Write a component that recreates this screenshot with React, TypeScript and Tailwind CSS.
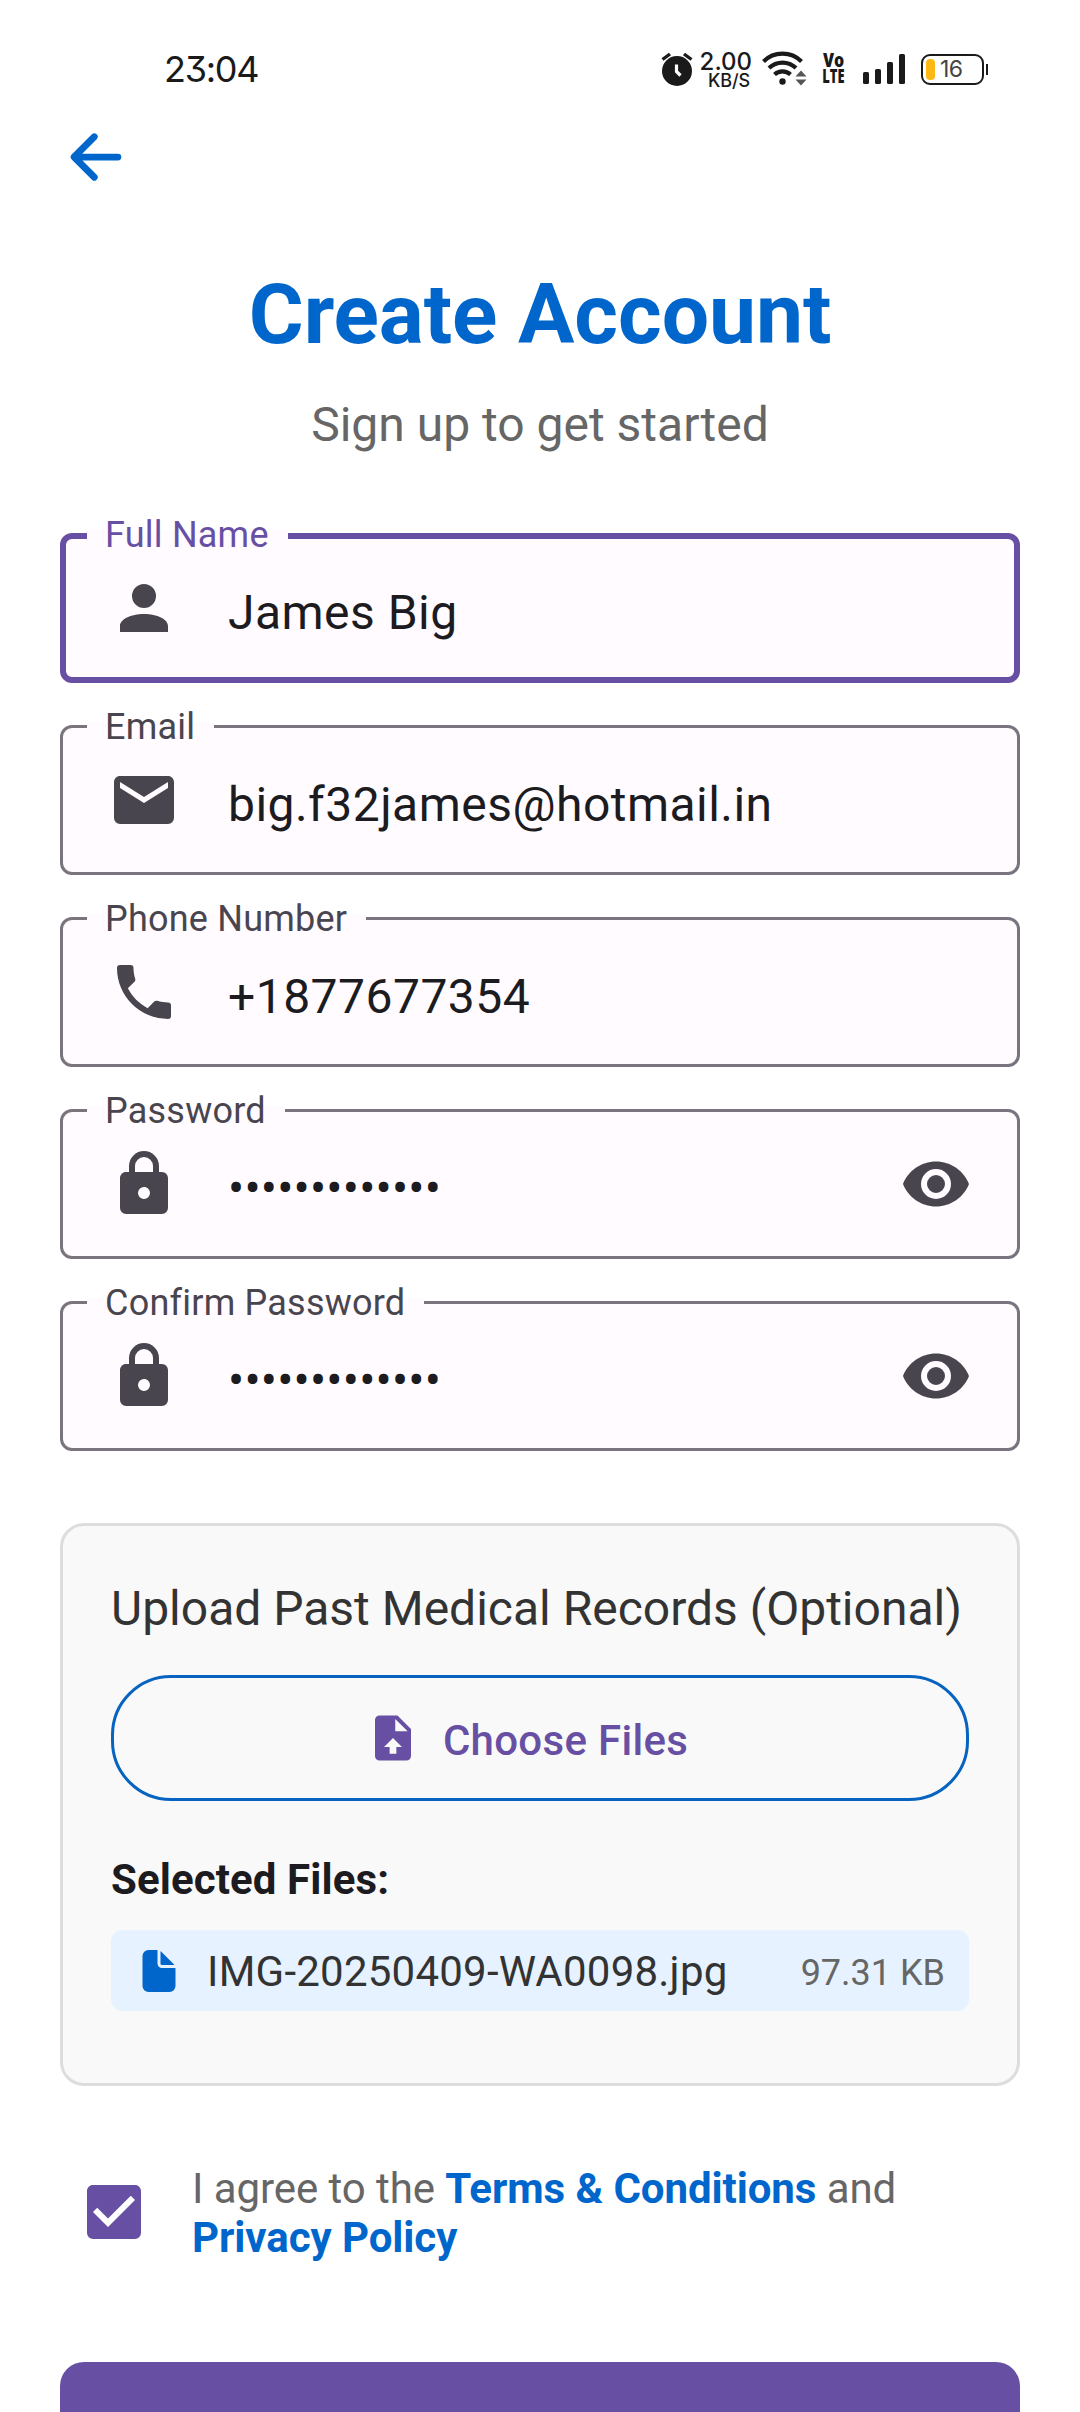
import React from "react";

const ICONS = {
  account:
    "M12,4A4,4 0 0,1 16,8A4,4 0 0,1 12,12A4,4 0 0,1 8,8A4,4 0 0,1 12,4M12,14C16.42,14 20,15.79 20,18V20H4V18C4,15.79 7.58,14 12,14Z",
  email:
    "M20,8L12,13L4,8V6L12,11L20,6M20,4H4C2.89,4 2,4.89 2,6V18A2,2 0 0,0 4,20H20A2,2 0 0,0 22,18V6C22,4.89 21.1,4 20,4Z",
  phone:
    "M6.62,10.79C8.06,13.62 10.38,15.94 13.21,17.38L15.41,15.18C15.69,14.9 16.08,14.82 16.43,14.93C17.55,15.3 18.75,15.5 20,15.5A1,1 0 0,1 21,16.5V20A1,1 0 0,1 20,21A17,17 0 0,1 3,4A1,1 0 0,1 4,3H7.5A1,1 0 0,1 8.5,4C8.5,5.25 8.7,6.45 9.07,7.57C9.18,7.92 9.1,8.31 8.82,8.59L6.62,10.79Z",
  lock:
    "M12,17A2,2 0 0,0 14,15C14,13.89 13.1,13 12,13A2,2 0 0,0 10,15A2,2 0 0,0 12,17M18,8A2,2 0 0,1 20,10V20A2,2 0 0,1 18,22H6A2,2 0 0,1 4,20V10C4,8.89 4.9,8 6,8H7V6A5,5 0 0,1 12,1A5,5 0 0,1 17,6V8H18M12,3A3,3 0 0,0 9,6V8H15V6A3,3 0 0,0 12,3Z",
  eye:
    "M12,9A3,3 0 0,0 9,12A3,3 0 0,0 12,15A3,3 0 0,0 15,12A3,3 0 0,0 12,9M12,17A5,5 0 0,1 7,12A5,5 0 0,1 12,7A5,5 0 0,1 17,12A5,5 0 0,1 12,17M12,4.5C7,4.5 2.73,7.61 1,12C2.73,16.39 7,19.5 12,19.5C17,19.5 21.27,16.39 23,12C21.27,7.61 17,4.5 12,4.5Z",
  fileUpload:
    "M14,2H6A2,2 0 0,0 4,4V20A2,2 0 0,0 6,22H18A2,2 0 0,0 20,20V8L14,2M13.5,16V19H10.5V16H8L12,12L16,16H13.5M13,9V3.5L18.5,9H13Z",
  checkbox:
    "M10,17L5,12L6.41,10.58L10,14.17L17.59,6.58L19,8M19,3H5C3.89,3 3,3.89 3,5V19A2,2 0 0,0 5,21H19A2,2 0 0,0 21,19V5C21,3.89 20.1,3 19,3Z",
};

function Icon({ name, className }: { name: keyof typeof ICONS; className: string }) {
  return (
    <svg viewBox="0 0 24 24" fill="currentColor" className={className}>
      <path d={ICONS[name]} />
    </svg>
  );
}

function StatusBar() {
  return (
    <div className="flex h-[121px] items-start pr-[92px] pl-[164px] font-['Inter',sans-serif] text-[#1a1a1a]">
      <span className="mt-[47px] text-[36px] leading-[44px] tracking-[-1.3px] [font-feature-settings:'cv09']">
        23:04
      </span>
      <div className="mt-[50px] ml-auto flex items-start">
        <svg viewBox="0 0 32 36" className="mt-[1px] h-9 w-8">
          <circle cx="16" cy="20" r="15" fill="#1a1a1a" />
          <path d="M1.5 8.5L9 3M30.5 8.5L23 3" stroke="#1a1a1a" strokeWidth="3.4" />
          <path d="M15.5 13.5V20.5L19.5 24.5" stroke="#fff" strokeWidth="3.2" fill="none" />
        </svg>
        <div className="ml-[8px] flex w-[51px] flex-col items-end font-medium">
          <span className="text-[24px] leading-[24px]">2.00</span>
          <span className="pr-[2px] text-[18px] leading-[14px] tracking-[-0.1px]">KB/S</span>
        </div>
        <svg viewBox="0 0 45 36" className="ml-[10px] h-9 w-[45px]">
          <g fill="none" stroke="#1a1a1a" strokeWidth="4.2">
            <path d="M1.5 11.5A27 27 0 0 1 39.5 11.5" />
            <path d="M7 18A19.5 19.5 0 0 1 34 18" />
            <path d="M12.5 24.5A12 12 0 0 1 28.5 24.5" />
          </g>
          <circle cx="20.5" cy="31.5" r="3.2" fill="#1a1a1a" />
          <path d="M39 20.5L44.5 26.5H33.5zM39 35.5L44.5 29.5H33.5z" fill="#555" />
        </svg>
        <div className="mt-[2px] ml-[15px] flex w-[23px] flex-col items-center font-['Open_Sans',sans-serif] text-[19px] leading-[16px] font-extrabold">
          <span className="scale-x-[0.84]">Vo</span>
          <span className="scale-x-[0.68]">LTE</span>
        </div>
        <div className="mt-[4px] ml-[18px] flex h-[30px] items-end gap-[6px]">
          <div className="h-[12px] w-[6px] rounded-[1.5px] bg-[#1a1a1a]" />
          <div className="h-[15px] w-[6px] rounded-[1.5px] bg-[#1a1a1a]" />
          <div className="h-[22px] w-[6px] rounded-[1.5px] bg-[#1a1a1a]" />
          <div className="h-[30px] w-[6px] rounded-[1.5px] bg-[#1a1a1a]" />
        </div>
        <div className="mt-[4px] ml-[16px] flex items-center">
          <div className="flex h-[31px] w-[63px] items-center rounded-[9px] border-2 border-[#1a1a1a] pl-[3px]">
            <div className="h-[21px] w-[9px] rounded-[4px] bg-[#fdb913]" />
            <span className="ml-[5px] text-[23px] leading-[27px] tracking-[-0.5px] text-[#444]">16</span>
          </div>
          <div className="ml-[2px] h-[11px] w-[2px] bg-[#1a1a1a]" />
        </div>
      </div>
    </div>
  );
}

type FieldProps = {
  label: string;
  value: string;
  icon: keyof typeof ICONS;
  active?: boolean;
  secret?: boolean;
};

function Field({ label, value, icon, active, secret }: FieldProps) {
  return (
    <div
      className={
        active
          ? "relative h-[150px] rounded-[12px] border-[6px] border-[#6750a4] bg-[#fffbfe] px-[42px]"
          : "relative h-[150px] rounded-[12px] border-[3px] border-[#79747e] bg-[#fffbfe] px-[45px]"
      }
    >
      <label
        className={
          active
            ? "absolute -top-[9px] left-[21px] flex h-[9px] items-center bg-[#fffbfe] pr-[19px] pl-[18px] text-[36px] leading-[48px] whitespace-nowrap text-[#6750a4]"
            : "absolute -top-[6px] left-[24px] flex h-[9px] items-center bg-[#fffbfe] pr-[19px] pl-[18px] text-[36px] leading-[48px] whitespace-nowrap text-[#49454f]"
        }
      >
        <span className="tracking-[0.22px]">{label}</span>
      </label>
      <div className="flex h-full items-center">
        <Icon name={icon} className="size-[72px] shrink-0 text-[#49454f]" />
        <span
          className={
            secret
              ? "mt-[10px] ml-[48px] grow text-[48px] leading-[56px] tracking-[0.2px] text-[#1c1b1f]"
              : "mt-[10px] ml-[48px] grow text-[48px] leading-[56px] tracking-[0.47px] text-[#1c1b1f]"
          }
        >
          {value}
        </span>
        {secret && <Icon name="eye" className="size-[72px] shrink-0 text-[#49454f]" />}
      </div>
    </div>
  );
}

function UploadCard() {
  return (
    <section className="mt-[72px] flex h-[563px] flex-col rounded-[24px] border-[3px] border-[#ddd] bg-[#f9f9f9] p-12">
      <h2 className="-mt-px text-[48px] leading-[72px] whitespace-nowrap text-[#333]">
        Upload Past Medical Records (Optional)
      </h2>
      <button className="mt-[30px] flex h-[126px] items-center justify-center rounded-[60px] border-[3px] border-[#0664c0] pr-[26px] text-[#6750a4]">
        <Icon name="fileUpload" className="size-[54px]" />
        <span className="mt-[6px] ml-[23px] text-[42px] leading-[60px] font-medium tracking-[0.3px]">Choose Files</span>
      </button>
      <h3 className="mt-[49px] text-[42px] leading-[60px] font-bold tracking-[0.1px] text-[#1c1b1f]">
        Selected Files:
      </h3>
      <div className="mt-[20px] flex h-[81px] items-center rounded-[12px] bg-[#e6f2ff] px-6">
        <svg viewBox="0 0 512 512" fill="#0066cc" className="size-12">
          <path d="M428 224H288a48 48 0 01-48-48V36a4 4 0 00-4-4h-92a64 64 0 00-64 64v320a64 64 0 0064 64h224a64 64 0 0064-64V228a4 4 0 00-4-4z" />
          <path d="M419.22 188.59L275.41 44.78a2 2 0 00-3.41 1.41V176a16 16 0 0016 16h129.81a2 2 0 001.41-3.41z" />
        </svg>
        <span className="mt-[3px] ml-[24px] grow text-[42px] leading-[60px] tracking-[0.23px] text-[#333]">
          IMG-20250409-WA0098.jpg
        </span>
        <span className="mt-[4px] text-[36px] leading-[48px] text-[#666]">97.31 KB</span>
      </div>
    </section>
  );
}

export default function App() {
  return (
    <div className="h-[2412px] w-[1080px] overflow-hidden bg-white font-['Roboto',sans-serif]">
      <StatusBar />
      <main className="flex flex-col px-[60px]">
        <svg
          viewBox="0 0 512 512"
          fill="none"
          stroke="#0066cc"
          strokeWidth="48"
          strokeLinecap="round"
          strokeLinejoin="round"
          className="size-[72px]"
        >
          <path d="M244 400L100 256l144-144M120 256h292" />
        </svg>
        <h1 className="mt-[73px] text-center text-[84px] leading-[98px] font-bold tracking-[-0.1px] text-[#0066cc]">
          Create Account
        </h1>
        <p className="mt-[33px] text-center text-[48px] leading-[56px] text-[#666]">Sign up to get started</p>
        <form className="mt-[80px] flex flex-col gap-[42px]">
          <Field label="Full Name" value="James Big" icon="account" active />
          <Field label="Email" value="big.f32james@hotmail.in" icon="email" />
          <Field label="Phone Number" value="+1877677354" icon="phone" />
          <Field label="Password" value="•••••••••••••" icon="lock" secret />
          <Field label="Confirm Password" value="•••••••••••••" icon="lock" secret />
        </form>
        <UploadCard />
        <div className="mt-[77px] flex h-[98px] items-center pl-[18px]">
          <Icon name="checkbox" className="size-[72px] shrink-0 text-[#6750a4]" />
          <p className="mt-[2px] ml-[42px] text-[42px] leading-[49px] tracking-[-0.07px] text-[#666]">
            I agree to the <b className="font-bold text-[#0066cc]">Terms &amp; Conditions</b> and
            <br />
            <b className="font-bold text-[#0066cc]">Privacy Policy</b>
          </p>
        </div>
        <button className="mt-[101px] h-[150px] rounded-[24px] bg-[#6750a4]" aria-label="Sign Up" />
      </main>
    </div>
  );
}
